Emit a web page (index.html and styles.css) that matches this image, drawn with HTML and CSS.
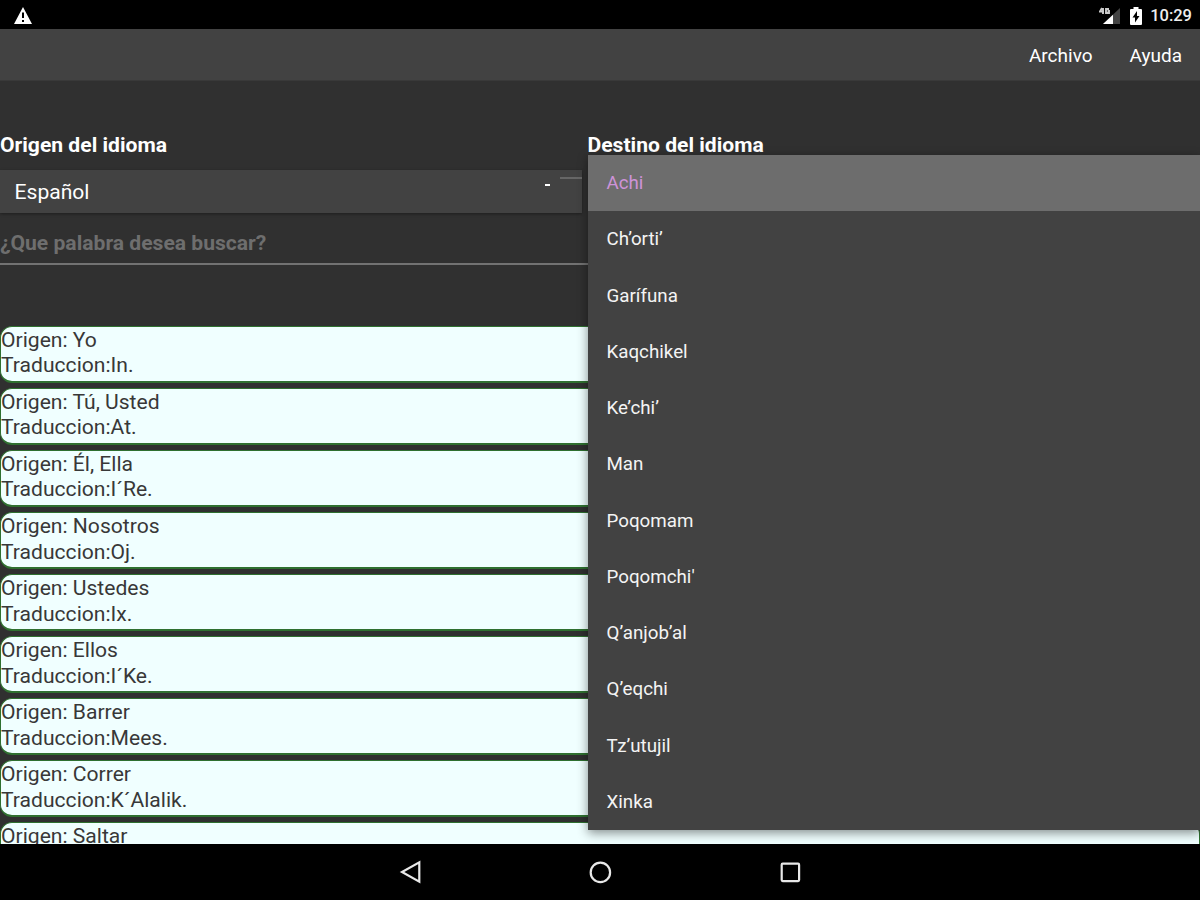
FILE: index.html
```html
<!DOCTYPE html>
<html lang="es">

<head>
    <meta charset="utf-8">
    <title>Traductor de idiomas</title>
    <link rel="stylesheet" href="styles.css">
</head>

<body>
    <div class="status">
        <svg class="warning" width="20" height="18" viewBox="0 0 20 18">
            <path fill="#fff" fill-rule="evenodd" d="M10 0L19 17H1zM9 5.500v5.500h2V5.500zM9 13v2h2v-2z" />
        </svg>
        <svg class="signal" width="22" height="18" viewBox="0 0 22 18">
            <path fill="#444" d="M21 1v16H4z" />
            <path fill="#fff" d="M14 7.700V17H4z" />
            <path fill="none" stroke="#ccc" stroke-width="1.900" d="M3 1L1 4.500H5M4 1V7M10 2H7V6H10V4H8.500" />
        </svg>
        <svg class="battery" width="12" height="18" viewBox="0 0 12 18">
            <path fill="#fff" fill-rule="evenodd" d="M3.500 0h5v2H11q1 0 1 1v14q0 1-1 1H1q-1 0-1-1V3q0-1 1-1h2.500zM7 4L2.500 10.500H5V15.500L9.500 9H7z" />
        </svg>
        <span class="clock">10:29</span>
    </div>

    <div class="toolbar">
        <span>Archivo</span>
        <span>Ayuda</span>
    </div>

    <div class="content">
        <div class="labels">
            <label>Origen del idioma</label>
            <label>Destino del idioma</label>
        </div>
        <div class="spinner">
            <span>Español</span>
            <i class="dot"></i>
            <i class="dash"></i>
        </div>
        <input class="search" type="text" placeholder="¿Que palabra desea buscar?">

        <div class="list">
            <div class="card">Origen: Yo<br>Traduccion:In.</div>
            <div class="card">Origen: Tú, Usted<br>Traduccion:At.</div>
            <div class="card">Origen: Él, Ella<br>Traduccion:I´Re.</div>
            <div class="card">Origen: Nosotros<br>Traduccion:Oj.</div>
            <div class="card">Origen: Ustedes<br>Traduccion:Ix.</div>
            <div class="card">Origen: Ellos<br>Traduccion:I´Ke.</div>
            <div class="card">Origen: Barrer<br>Traduccion:Mees.</div>
            <div class="card">Origen: Correr<br>Traduccion:K´Alalik.</div>
            <div class="card">Origen: Saltar</div>
        </div>

        <div class="dropdown">
            <div class="item selected">Achi</div>
            <div class="item">Ch’orti’</div>
            <div class="item">Garífuna</div>
            <div class="item">Kaqchikel</div>
            <div class="item">Ke’chi’</div>
            <div class="item">Man</div>
            <div class="item">Poqomam</div>
            <div class="item">Poqomchi'</div>
            <div class="item">Q’anjob’al</div>
            <div class="item">Q’eqchi</div>
            <div class="item">Tz’utujil</div>
            <div class="item">Xinka</div>
        </div>
    </div>

    <div class="navbar">
        <svg width="24" height="24" viewBox="0 0 24 24">
            <path d="M21.300 2.300V21.700L4 12z" />
        </svg>
        <svg width="24" height="24" viewBox="0 0 24 24">
            <circle cx="12.400" cy="12.400" r="9.700" />
        </svg>
        <svg width="24" height="24" viewBox="0 0 24 24">
            <rect x="3.700" y="3.700" width="17.400" height="17.400" rx="1" />
        </svg>
    </div>
</body>

</html>
```
FILE: styles.css
```css
* {
    box-sizing: border-box;
}

body {
    margin: 0;
    width: 1200px;
    height: 900px;
    overflow: hidden;
    display: flex;
    flex-direction: column;
    background-color: #303030;
    color: #fff;
    font-family: Roboto, "Liberation Sans", sans-serif;
}

.status {
    height: 29px;
    flex: none;
    display: flex;
    align-items: center;
    padding: 2px 8px 0 13px;
    background-color: #000;
}

.signal {
    margin-left: auto;
}

.battery {
    margin: 0 8px 0 9px;
}

.clock {
    font-size: 16.5px;
    font-weight: 500;
    color: #eee;
}

.toolbar {
    height: 52px;
    flex: none;
    display: flex;
    align-items: center;
    justify-content: flex-end;
    gap: 37px;
    padding: 1px 18px 0 0;
    background-color: #424242;
    border-bottom: 1px solid #393939;
    font-size: 19px;
}

.content {
    position: relative;
    height: 763px;
    flex: none;
    overflow: hidden;
    padding-top: 51px;
}

.labels {
    display: grid;
    grid-template-columns: 587.5px 1fr;
    height: 38px;
    line-height: 26px;
    font-size: 21.1px;
    font-weight: 700;
}

.spinner {
    width: 582px;
    height: 43px;
    display: flex;
    align-items: flex-start;
    padding-left: 14.5px;
    background-color: #424242;
    box-shadow: 0 1px 3px rgba(0, 0, 0, 0.4);
    line-height: 44px;
    font-size: 21.1px;
}

.spinner .dot {
    width: 5px;
    height: 2px;
    margin: 14px 10px 0 auto;
    background-color: #fff;
}

.spinner .dash {
    width: 22px;
    height: 2px;
    margin-top: 7px;
    background-color: #666;
}

.search {
    display: block;
    width: 100%;
    height: 52px;
    padding: 9px 0 0;
    border: 0;
    border-bottom: 2px solid #727272;
    background: none;
    outline: 0;
    color: #fff;
    font-family: inherit;
    font-size: 21.1px;
    font-weight: 700;
}

.search::placeholder {
    color: #6e6e6e;
}

.list {
    display: flex;
    flex-direction: column;
    gap: 5.1px;
    padding-top: 60.5px;
}

.card {
    height: 57px;
    flex: none;
    border: 2px solid #2f7030;
    border-width: 1px 1px 2px 1px;
    border-radius: 12px;
    background-color: #f0ffff;
    color: #383838;
    font-size: 21.1px;
    line-height: 25.8px;
}

.dropdown {
    position: absolute;
    top: 74px;
    left: 587.5px;
    right: 0;
    background-color: #424242;
    box-shadow: 0 3px 10px rgba(0, 0, 0, 0.45);
}

.item {
    height: 56.25px;
    padding-left: 19px;
    line-height: 57.5px;
    font-size: 18.75px;
    color: #f4f4f4;
}

.item.selected {
    background-color: #6d6d6d;
    color: #ce93d8;
}

.navbar {
    flex: 1;
    display: flex;
    align-items: center;
    justify-content: center;
    gap: 166px;
    background-color: #000;
}

.navbar svg {
    fill: none;
    stroke: #e8e8e8;
    stroke-width: 2.2;
}
```
